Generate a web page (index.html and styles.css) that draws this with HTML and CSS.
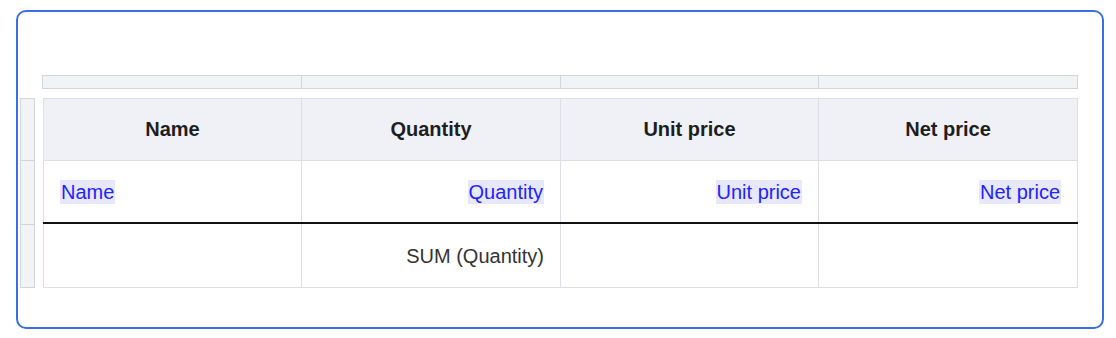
FILE: index.html
```html
<!DOCTYPE html>
<html lang="en">
<head>
<meta charset="utf-8">
<title>Report table</title>
<link rel="stylesheet" href="styles.css">
</head>
<body>
<div class="frame">
  <div class="layout">
    <div class="corner"></div>
    <div class="col-ruler">
      <div class="col-mark"></div>
      <div class="col-mark"></div>
      <div class="col-mark"></div>
      <div class="col-mark"></div>
    </div>
    <div class="row-ruler">
      <div class="row-mark head"></div>
      <div class="row-mark body"></div>
      <div class="row-mark foot"></div>
    </div>
    <table class="report">
      <colgroup>
        <col class="c1">
        <col class="c2">
        <col class="c3">
        <col>
      </colgroup>
      <thead>
        <tr>
          <th>Name</th>
          <th>Quantity</th>
          <th>Unit price</th>
          <th>Net price</th>
        </tr>
      </thead>
      <tbody>
        <tr class="data">
          <td class="left"><span class="field">Name</span></td>
          <td class="right"><span class="field">Quantity</span></td>
          <td class="right"><span class="field">Unit price</span></td>
          <td class="right"><span class="field">Net price</span></td>
        </tr>
      </tbody>
      <tfoot>
        <tr class="total">
          <td></td>
          <td class="right">SUM (Quantity)</td>
          <td></td>
          <td></td>
        </tr>
      </tfoot>
    </table>
  </div>
</div>
</body>
</html>
```

FILE: styles.css
```css
html, body {
  margin: 0;
  padding: 0;
  background: #ffffff;
}

body {
  padding: 10px 12px 0 16px;
  font-family: "Liberation Sans", Arial, sans-serif;
}

.frame {
  box-sizing: border-box;
  width: 1088px;
  height: 319px;
  border: 2px solid #3a6ee6;
  border-radius: 10px;
  padding: 63px 0 0 2px;
}

.layout {
  display: grid;
  grid-template-columns: 15px 7px 1036px;
  grid-template-rows: 14px 9px auto;
}

.corner {
  grid-column: 1;
  grid-row: 1;
}

.col-ruler {
  grid-column: 3;
  grid-row: 1;
  display: grid;
  grid-template-columns: 258px 259px 258px 1fr;
  background: #f2f3f5;
  border: 1px solid #d3d5dc;
  box-sizing: border-box;
}

.col-mark + .col-mark {
  border-left: 1px solid #d3d5dc;
}

.row-ruler {
  grid-column: 1;
  grid-row: 3;
  display: flex;
  flex-direction: column;
  background: #f2f3f5;
  border: 1px solid #d3d5dc;
  box-sizing: border-box;
  height: 190px;
}

.row-mark.head { height: 61px; }
.row-mark.body { height: 63px; border-top: 1px solid #d3d5dc; }
.row-mark.foot { flex: 1; border-top: 1px solid #d3d5dc; }

.report {
  grid-column: 3;
  grid-row: 3;
  margin-left: 1px;
  width: 1035px;
  border-collapse: collapse;
  table-layout: fixed;
  font-size: 20px;
}

.report .c1 { width: 258px; }
.report .c2 { width: 259px; }
.report .c3 { width: 258px; }

.report th,
.report td {
  border: 1px solid #dedfe6;
  padding: 0 16px;
}

.report th {
  height: 61px;
  background: #f0f1f6;
  color: #1e1e1e;
  font-weight: bold;
  text-align: center;
}

.report .data td {
  height: 60px;
  padding-top: 1px;
}

.report .total td {
  height: 61px;
  border-top: 2px solid #111111;
  color: #333333;
  padding-top: 2px;
}

.left { text-align: left; }
.right { text-align: right; }

.field {
  color: #2222ff;
  background: #e8e8fd;
  padding: 1px 1px;
}
```
